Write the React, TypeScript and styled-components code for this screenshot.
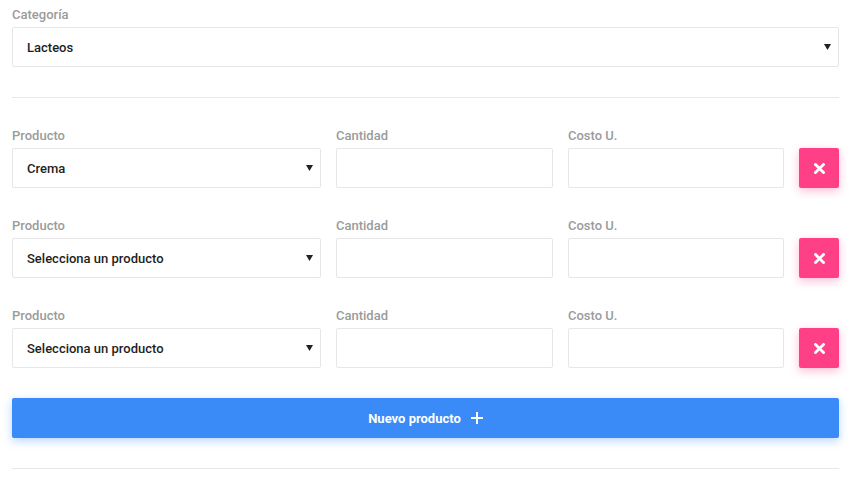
import styled, { createGlobalStyle } from "styled-components";

const GlobalStyle = createGlobalStyle`
  html, body {
    margin: 0;
    padding: 0;
    background: #ffffff;
  }
  body {
    font-family: Roboto, "Liberation Sans", Arial, sans-serif;
  }
  * {
    box-sizing: border-box;
  }
`;

type Line = { product: string };

const lines: Line[] = [
  { product: "Crema" },
  { product: "Selecciona un producto" },
  { product: "Selecciona un producto" },
];

function Arrow() {
  return (
    <svg width="7" height="6" viewBox="0 0 7 6">
      <path d="M0 0 H7 L3.5 6 Z" fill="#222" />
    </svg>
  );
}

function Cross() {
  return (
    <svg width="11" height="11" viewBox="0 0 11 11">
      <path d="M1.5 1.5 L9.5 9.5 M9.5 1.5 L1.5 9.5" stroke="#fff" strokeWidth="2.8" strokeLinecap="square" />
    </svg>
  );
}

function Plus() {
  return (
    <svg width="12" height="12" viewBox="0 0 12 12">
      <path d="M6 0 V12 M0 6 H12" stroke="#fff" strokeWidth="2" />
    </svg>
  );
}

export default function App() {
  return (
    <>
      <GlobalStyle />
      <Page>
        <Field>
          <Label>Categoría</Label>
          <Select>
            <span>Lacteos</span>
            <Arrow />
          </Select>
        </Field>

        <Divider />

        <Rows>
          {lines.map((line, i) => (
            <Row key={i}>
              <Field>
                <Label>Producto</Label>
                <Select>
                  <span>{line.product}</span>
                  <Arrow />
                </Select>
              </Field>
              <Field>
                <Label>Cantidad</Label>
                <Input />
              </Field>
              <Field>
                <Label>Costo U.</Label>
                <Input />
              </Field>
              <RemoveButton>
                <Cross />
              </RemoveButton>
            </Row>
          ))}
        </Rows>

        <AddButton>
          Nuevo producto
          <Plus />
        </AddButton>

        <Divider />
      </Page>
    </>
  );
}

const Page = styled.div`
  padding: 7px 14px 0 12px;
  display: flex;
  flex-direction: column;
`;

const Field = styled.div`
  display: flex;
  flex-direction: column;
  min-width: 0;
`;

const Label = styled.label`
  font-size: 13px;
  line-height: 15px;
  font-weight: 500;
  color: #9b9b9b;
  margin-bottom: 5px;
`;

const Select = styled.div`
  height: 40px;
  border: 1px solid #e6e6e6;
  border-radius: 2px;
  background: #fff;
  display: flex;
  align-items: center;
  justify-content: space-between;
  padding: 0 7px 0 14px;
  font-size: 13px;
  font-weight: 500;
  color: #1e1e1e;
`;

const Input = styled.div`
  height: 40px;
  border: 1px solid #e6e6e6;
  border-radius: 2px;
  background: #fff;
`;

const Divider = styled.hr`
  border: none;
  border-top: 1px solid #e8e8e8;
  margin: 30px 0 0;
  width: 100%;
`;

const Rows = styled.div`
  display: flex;
  flex-direction: column;
  gap: 30px;
  margin-top: 30px;
`;

const Row = styled.div`
  display: grid;
  grid-template-columns: 309px 217px 216px 40px;
  column-gap: 15px;
  align-items: end;
`;

const RemoveButton = styled.button`
  width: 40px;
  height: 40px;
  border: none;
  border-radius: 2px;
  background: #ff4087;
  box-shadow: 0 3px 10px rgba(255, 64, 135, 0.35);
  display: flex;
  align-items: center;
  justify-content: center;
  padding: 0;
  cursor: pointer;
`;

const AddButton = styled.button`
  margin-top: 30px;
  height: 40px;
  width: 100%;
  border: none;
  border-radius: 2px;
  background: #3a8af7;
  box-shadow: 0 3px 10px rgba(58, 138, 247, 0.35);
  color: #fff;
  font-family: Roboto, "Liberation Sans", Arial, sans-serif;
  font-size: 13px;
  font-weight: 700;
  display: flex;
  align-items: center;
  justify-content: center;
  gap: 10px;
  cursor: pointer;
`;
